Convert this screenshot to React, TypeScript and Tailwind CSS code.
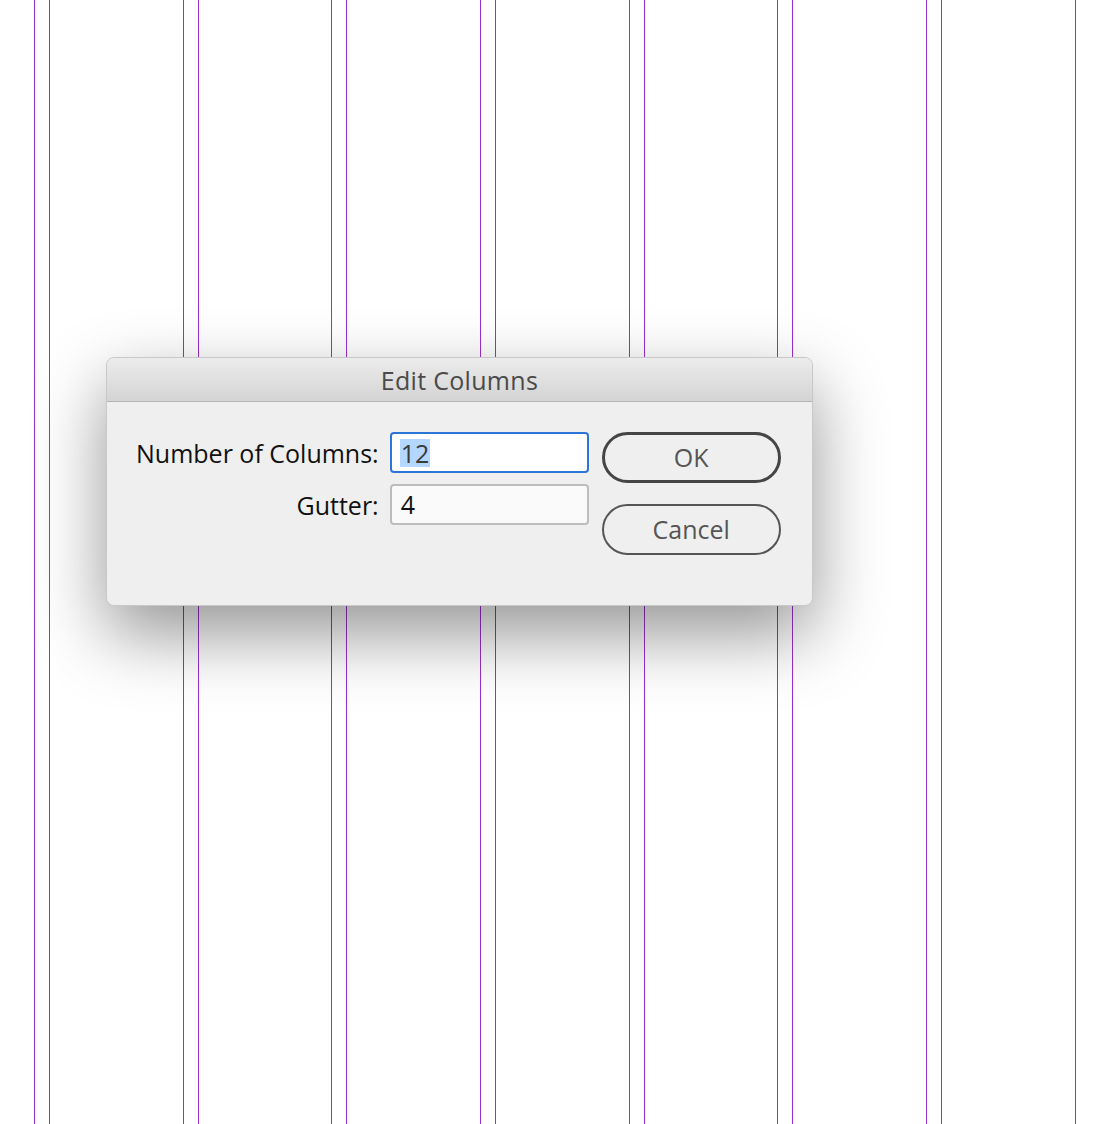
import React from "react";

const Gutter = ({ ml }: { ml: string }) => (
  <div className={`h-full w-[16px] shrink-0 border-x border-[#9b30d0] ${ml}`} />
);

export default function App() {
  return (
    <div
      className="relative w-[1116px] h-[1124px] overflow-hidden bg-white"
      style={{ fontFamily: '"Open Sans", "Liberation Sans", sans-serif' }}
    >
      <div className="flex h-full pl-[34px]">
        <Gutter ml="ml-0" />
        <Gutter ml="ml-[133px]" />
        <Gutter ml="ml-[132px]" />
        <Gutter ml="ml-[133px]" />
        <Gutter ml="ml-[133px]" />
        <Gutter ml="ml-[132px]" />
        <Gutter ml="ml-[133px]" />
        <div className="h-full w-px shrink-0 bg-[#9b30d0] ml-[133px]" />
      </div>

      <div className="absolute left-[106px] top-[357px] w-[707px] h-[249px] rounded-[8px] bg-[#efefef] border border-[#c8c8c8] shadow-[0_28px_70px_rgba(0,0,0,0.42)] flex flex-col overflow-hidden">
        <div className="h-[44px] shrink-0 flex items-center justify-center bg-gradient-to-b from-[#ececec] to-[#d4d4d4] border-b border-[#b3b3b3] text-[25px] tracking-[0.3px] text-[#4a4a4a] pt-[2px]">
          Edit Columns
        </div>
        <div className="flex items-start pt-[30px] pl-[29px]">
          <div className="grid grid-cols-[auto_199px] content-start gap-x-[11px] gap-y-[11px] items-center">
            <div className="text-right text-[25px] text-[#111] leading-none pt-[2px]">Number of Columns:</div>
            <div className="h-[41px] rounded-[4px] border-2 border-[#2b74d8] bg-white flex items-center pl-[8px]">
              <span className="bg-[#b3d7ff] text-[25px] text-[#3a3a3a] leading-[28px] px-[1px]">12</span>
            </div>
            <div className="text-right text-[25px] text-[#111] leading-none pt-[2px]">Gutter:</div>
            <div className="h-[41px] rounded-[4px] border-2 border-[#bdbdbd] bg-[#fafafa] flex items-center pl-[9px] text-[25px] text-[#111]">
              4
            </div>
          </div>
          <div className="ml-[13px] flex flex-col gap-[21px]">
            <button className="w-[179px] h-[51px] rounded-full border-[3px] border-[#454545] text-[25px] text-[#555] flex items-center justify-center pt-[1px]">
              OK
            </button>
            <button className="w-[179px] h-[51px] rounded-full border-2 border-[#555] text-[25px] text-[#555] flex items-center justify-center">
              Cancel
            </button>
          </div>
        </div>
      </div>
    </div>
  );
}
